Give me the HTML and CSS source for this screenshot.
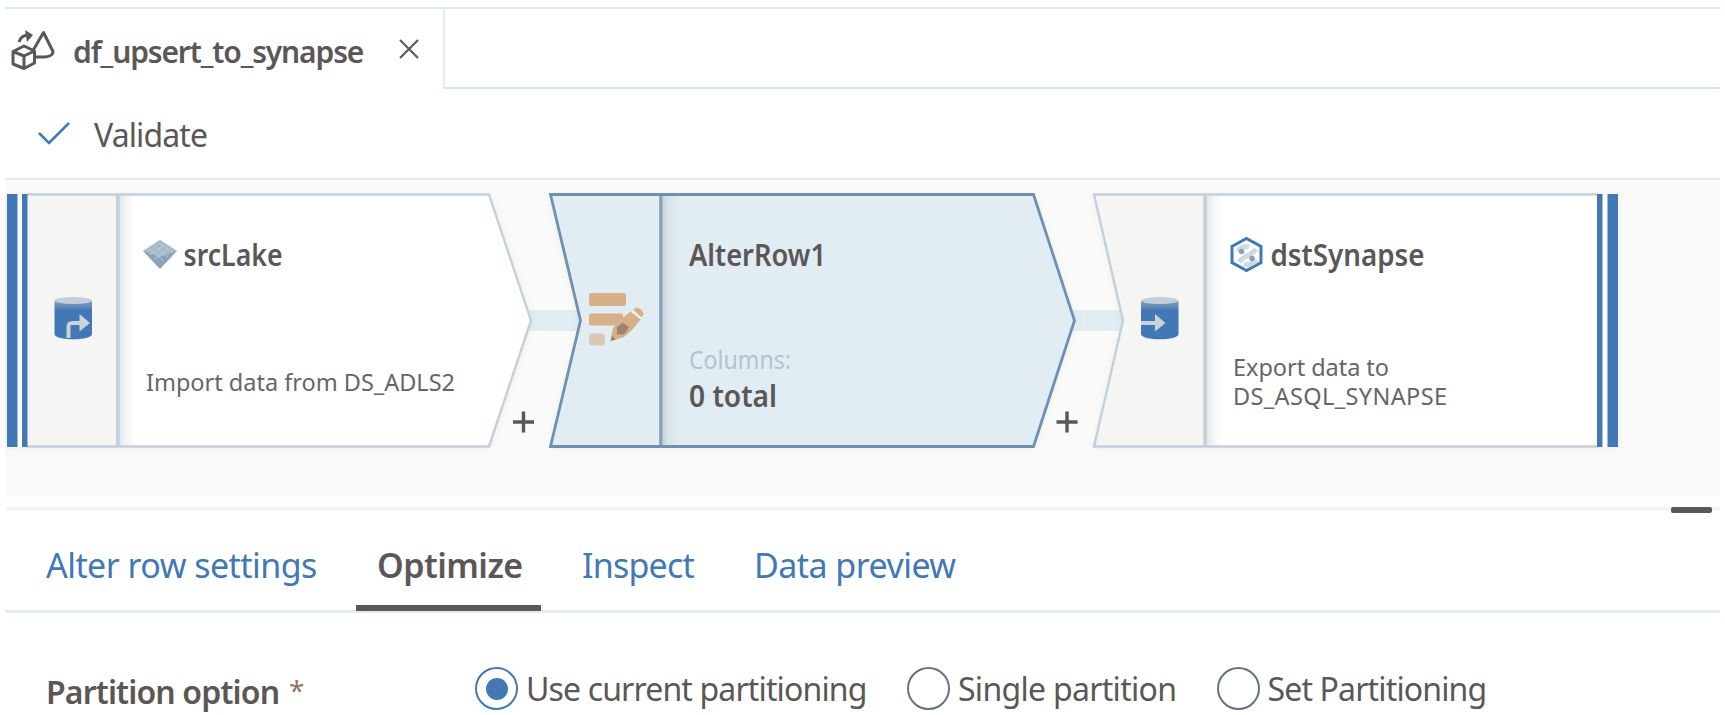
FILE: index.html
```html
<!DOCTYPE html>
<html lang="en">
<head>
<meta charset="utf-8">
<title>df_upsert_to_synapse</title>
<link rel="stylesheet" href="styles.css">
</head>
<body>
<main class="page">
  <header class="tabbar">
    <div class="file-tab">
      <svg class="flow-icon" width="44" height="42" viewBox="0 0 44 42" fill="none" stroke="#5b5757" stroke-width="3" stroke-linejoin="round">
        <path d="M2 22.500 13 17l10.500 5v12L13 39.500 2 35zM2 22.500 13 27l10.500-5M13 27v12"/>
        <path d="M22 21.500 32.500 3.500 42 22.500c0 4-5 5.500-9 5.500h-8"/>
        <path d="M8 13c1.500-5 5-7 10-7"/>
        <path d="M14 1 22 6 16 13z" fill="#5b5757" stroke="none"/>
      </svg>
      <span class="file-name">df_upsert_to_synapse</span>
      <svg class="close-icon" width="20" height="20" viewBox="0 0 20 20" fill="none" stroke="#5b5b60" stroke-width="2.200"><path d="M1 1 19 19M19 1 1 19"/></svg>
    </div>
    <div class="tab-rest"></div>
  </header>

  <div class="toolbar">
    <svg width="32" height="24" viewBox="0 0 32 24" fill="none" stroke="#4178b5" stroke-width="2.600"><path d="M1 12 11 22 31 2"/></svg>
    <span class="validate">Validate</span>
  </div>

  <section class="canvas">
    <svg class="graph" width="1715" height="317" viewBox="5 180 1715 317">
      <defs>
        <linearGradient id="edge" x1="0" x2="1" y1="0" y2="0"><stop offset="0" stop-color="#dce6ec"/><stop offset="0.400" stop-color="#f3f4f3"/><stop offset="1" stop-color="#fff"/></linearGradient>
        <linearGradient id="edgeSel" x1="0" x2="1" y1="0" y2="0"><stop offset="0" stop-color="#c3d0db"/><stop offset="0.300" stop-color="#d6e2ea"/><stop offset="1" stop-color="#e1ecf3"/></linearGradient>
        <linearGradient id="drum" x1="0" x2="0" y1="0" y2="1"><stop offset="0" stop-color="#8aa2b8"/><stop offset="0.250" stop-color="#4178b5"/></linearGradient>
        <filter id="shadow" x="-3%" y="-6%" width="106%" height="112%"><feDropShadow dx="0" dy="1" stdDeviation="4" flood-color="#8c8c80" flood-opacity="0.160"/></filter>
      </defs>

      <path d="M528 320.500h54M1072 320.500h54" stroke="#e1ecf3" stroke-width="21"/>

      <g filter="url(#shadow)"><path d="M7 194.500H489L531 320.500 489 447H7z" fill="#fff"/></g>
      <path d="M28 195h89v251H28z" fill="#f5f5f4"/>
      <path d="M119 195h16v251h-16z" fill="url(#edge)"/>
      <path d="M117.800 194.500V447" stroke="#c3d0db" stroke-width="3.600"/>
      <path d="M27 194.500H489L531 320.500 489 446.500H27" fill="none" stroke="#c3d0db" stroke-width="2.400"/>
      <path d="M7 194h10.500v253H7zM22 194h5.500v253H22z" fill="#4178b5"/>

      <g>
        <path d="M54.500 301v33c0 7 37.500 7 37.500 0v-33z" fill="url(#drum)"/>
        <ellipse cx="73.200" cy="300.500" rx="18.700" ry="3.500" fill="#c3d0db"/>
        <path d="M68.500 338V327c0-3 1-4 4-4h8" fill="none" stroke="#c9d3da" stroke-width="4"/>
        <path d="M79.500 314 90 323l-10.500 8.500z" fill="#c9d3da"/>
      </g>
      <path d="M143 251 160 240 177 251 160 269z" fill="#8aa2b8"/>
      <path d="M143 251 160 240 177 251 160 257z" fill="#c3d0db" opacity="0.500"/>
      <path d="m149 249 15 12M154 246l14 11M159 243l14 9M149 255l16-10M154 259l15-10" stroke="#b9c9d6" stroke-width="1"/>
      <text class="node-title" x="183.500" y="266" textLength="99" lengthAdjust="spacingAndGlyphs">srcLake</text>
      <text class="node-desc" x="146" y="391" textLength="309">Import data from DS_ADLS2</text>

      <g filter="url(#shadow)"><path d="M550 194.500H1033.500L1074.500 320.500 1033.500 447H550.500L580.500 320.500z" fill="#e1ecf3"/></g>
      <path d="M662 195h18v251h-18z" fill="url(#edgeSel)"/>
      <path d="M660.800 194.500V447" stroke="#8aa2b8" stroke-width="3.400"/>
      <path d="M550.500 194.500H1033.500L1074.500 320.500 1033.500 446.500H550.500L580.500 320.500z" fill="none" stroke="#6f90b1" stroke-width="2.800"/>
      <g fill="#d7b08a">
        <rect x="589" y="293" width="37" height="13" rx="2"/>
        <rect x="589" y="313.500" width="34" height="12" rx="2"/>
        <rect x="589" y="333.500" width="16" height="12" rx="4" opacity="0.600"/>
        <path d="M610 341.500 613 328 620 320 631 311 641 319 632 330 624 337z"/>
        <path d="m633 309.500 3.500-2c4 0.500 7 4 7 7l-2.500 3z"/>
      </g>
      <path d="m631.500 311 9.500 7.500" stroke="#f7f4ef" stroke-width="2"/>
      <path d="m617 327 6-4.500 6 5-5 7-7 0z" fill="#6f6157" opacity="0.550"/>
      <path d="m611 340.500 1.500-4.500 3 3.500z" fill="#6f6157" opacity="0.700"/>
      <text class="node-title" x="689" y="266" textLength="137" lengthAdjust="spacingAndGlyphs">AlterRow1</text>
      <text class="node-label" x="689" y="369" textLength="102" lengthAdjust="spacingAndGlyphs">Columns:</text>
      <text class="node-title" x="689" y="407" textLength="88" lengthAdjust="spacingAndGlyphs">0 total</text>

      <g filter="url(#shadow)"><path d="M1094.500 194.500H1618V447H1094.500L1123.500 320.500z" fill="#fff"/></g>
      <path d="M1094.500 194.500H1205V447H1094.500L1123.500 320.500z" fill="#f5f5f4"/>
      <path d="M1206 195h16v251h-16z" fill="url(#edge)"/>
      <path d="M1205 194.500V447" stroke="#c3d0db" stroke-width="3.400"/>
      <path d="M1598 194.500H1094L1123 320.500 1094 446.500H1598" fill="none" stroke="#c3d0db" stroke-width="2.400"/>
      <path d="M1597 194h5.500v253h-5.500zM1607.500 194h10.500v253h-10.500z" fill="#4178b5"/>
      <g>
        <path d="M1141 301v33c0 7 37.500 7 37.500 0v-33z" fill="url(#drum)"/>
        <ellipse cx="1159.700" cy="300.500" rx="18.700" ry="3.500" fill="#c3d0db"/>
        <path d="M1141 323h16" stroke="#c9d3da" stroke-width="4"/>
        <path d="M1155 314 1165.500 323 1155 331.500z" fill="#c9d3da"/>
      </g>
      <path d="M1246.500 238.500 1261 246.500V262.500L1246.500 270.500 1232 262.500V246.500z" fill="#fff" stroke="#4178b5" stroke-width="3"/>
      <path d="M1238 251c1-4 8-5 11-4M1256 249c-4 7-12 6-17 13M1256 260c-2 4-8 5-12 4" fill="none" stroke="#ced9e1" stroke-width="5"/>
      <circle cx="1241.500" cy="251.500" r="2.800" fill="#8aa2b8"/><circle cx="1252" cy="258.500" r="2.800" fill="#8aa2b8"/>
      <text class="node-title" x="1270.500" y="266" textLength="154" lengthAdjust="spacingAndGlyphs">dstSynapse</text>
      <text class="node-desc" x="1233" y="376" textLength="156">Export data to</text>
      <text class="node-desc" x="1233" y="405" textLength="214">DS_ASQL_SYNAPSE</text>

      <path d="M513 422h21M523.500 411.500v21M1056.500 422h21M1067 411.500v21" stroke="#5b5757" stroke-width="3.400"/>
    </svg>
  </section>

  <div class="splitter"><span class="handle"></span></div>

  <nav class="tabs">
    <a class="tab tab-settings">Alter row settings</a>
    <a class="tab tab-optimize">Optimize</a>
    <a class="tab tab-inspect">Inspect</a>
    <a class="tab tab-preview">Data preview</a>
  </nav>

  <form class="options">
    <span class="option-label">Partition option</span><span class="star">*</span>
    <label class="radio radio-current"><i class="dot on"></i><span>Use current partitioning</span></label>
    <label class="radio radio-single"><i class="dot"></i><span>Single partition</span></label>
    <label class="radio radio-set"><i class="dot"></i><span>Set Partitioning</span></label>
  </form>
</main>
</body>
</html>
```
FILE: styles.css
```css
* { box-sizing: border-box; }
body { margin: 0; background: #fff; color: #5b5757; font-family: "Noto Sans", "Open Sans", sans-serif; overflow: hidden; }
.page { width: 1725px; height: 715px; padding: 7px 5px 0; display: flex; flex-direction: column; white-space: nowrap; }
.page > * { flex: none; }
.tabbar { display: flex; height: 82px; border-top: 2px solid #dde9f0; }
.file-tab { display: flex; width: 440px; border-right: 2px solid #e1ecf3; padding-left: 6px; }
.tab-rest { flex: 1; border-bottom: 2px solid #d7e2e9; }
.flow-icon { margin-top: 20px; flex: none; }
.file-name { margin: 19px 0 0 18px; width: 308px; font-size: 30px; line-height: 48px; font-weight: 600; letter-spacing: -1.15px; }
.close-icon { margin: 30px 0 0 18px; flex: none; }
.toolbar { display: flex; height: 91px; padding: 32px 0 0 33px; border-bottom: 2px solid #e1ecf3; }
.validate { margin: -10px 0 0 24px; font-size: 32px; line-height: 48px; letter-spacing: -0.9px; }
.canvas { height: 317px; background: #fafaf9; }
.graph { display: block; }
.node-title { font-size: 30px; font-weight: 600; fill: #5b5757; }
.node-desc { font-size: 23.5px; fill: #666569; }
.node-label { font-size: 26px; fill: #b4c3d0; }
.splitter { height: 18px; display: flex; justify-content: flex-end; padding: 10px 8px 0 0; background: linear-gradient(#f5f5f4, #f5f5f4) 0 10px / 100% 4px no-repeat; }
.handle { width: 41px; height: 6px; border-radius: 2px; background: #5b5757; }
.tabs { display: flex; height: 98px; padding-left: 41px; border-bottom: 3px solid #e1ecf3; font-size: 34px; letter-spacing: -0.55px; }
.tab { height: 96px; line-height: 48px; padding-top: 26px; color: #4178b5; }
.tab-settings { width: 310px; }
.tab-optimize { width: 185px; padding-left: 21px; border-bottom: 6px solid #5b5757; color: #5b5757; font-weight: 600; }
.tab-inspect { margin-left: 41px; width: 172px; letter-spacing: -0.8px; }
.options { display: flex; padding: 54px 0 0 41px; font-size: 32px; line-height: 44px; letter-spacing: -0.85px; }
.option-label { width: 238px; margin-top: 3px; height: 44px; font-weight: 600; }
.star { width: 186px; margin: 1px 0 0 5px; height: 44px; color: #8f7868; font-size: 28px; }
.radio { display: flex; }
.radio-current { width: 432px; }
.radio-single { width: 309.5px; letter-spacing: -0.7px; }
.dot { flex: none; display: flex; width: 43px; height: 43px; border: 2.5px solid #66737f; border-radius: 50%; margin-right: 8px; }
.dot.on { border-color: #4178b5; }
.dot.on::after { content: ""; width: 22px; height: 22px; margin: auto; border-radius: 50%; background: #4178b5; }
```
